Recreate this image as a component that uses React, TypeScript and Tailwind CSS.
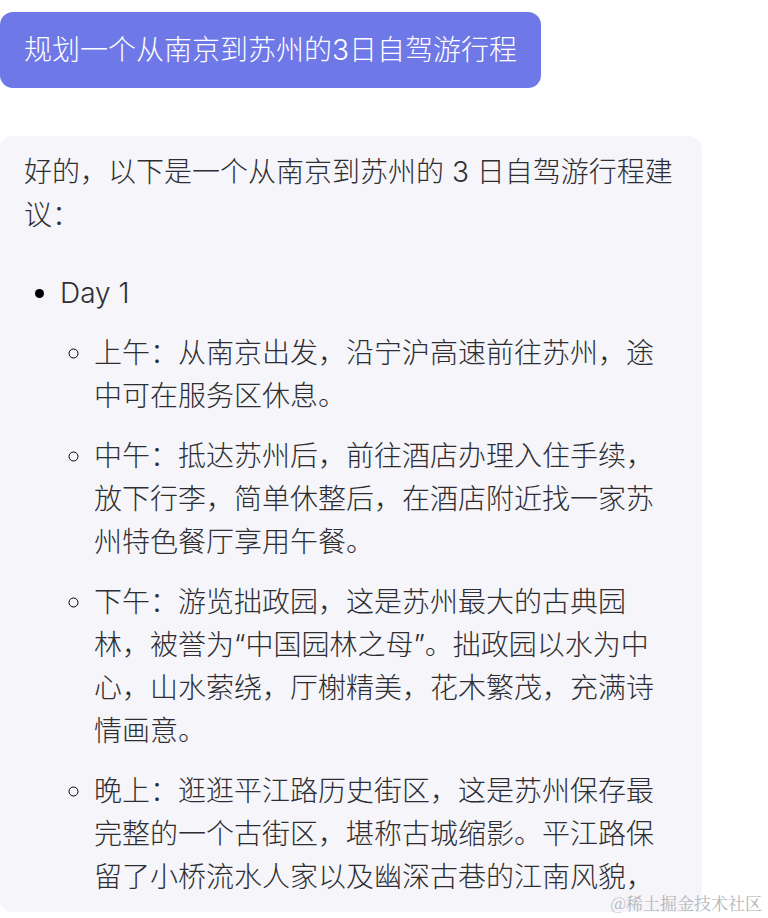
import React from 'react'

const items = [
  '上午：从南京出发，沿宁沪高速前往苏州，途中可在服务区休息。',
  '中午：抵达苏州后，前往酒店办理入住手续，放下行李，简单休整后，在酒店附近找一家苏州特色餐厅享用午餐。',
  '下午：游览拙政园，这是苏州最大的古典园林，被誉为“中国园林之母”。拙政园以水为中心，山水萦绕，厅榭精美，花木繁茂，充满诗情画意。',
  '晚上：逛逛平江路历史街区，这是苏州保存最完整的一个古街区，堪称古城缩影。平江路保留了小桥流水人家以及幽深古巷的江南风貌，',
]

export default function App() {
  return (
    <div
      className="relative h-[918px] w-[768px] overflow-hidden bg-white"
      style={{ fontFamily: 'Inter, "Noto Sans CJK SC", sans-serif' }}
      lang="zh-CN"
    >
      <div className="pt-3">
        {/* user message */}
        <div className="inline-block rounded-[13px] bg-[#6e78e7] px-6 py-[16px] text-[28px] font-light leading-[44px] text-white">
          规划一个从南京到苏州的3日自驾游行程
        </div>

        {/* assistant reply */}
        <div className="mt-12 h-[776px] w-[702px] rounded-[13px] bg-[#f5f5fa] px-6 pt-[15px] text-[28px] font-light leading-[43px] text-[#2e2e32]">
          <p>好的，以下是一个从南京到苏州的 3 日自驾游行程建议：</p>
          <ul className="mt-[35px] list-disc pl-9">
            <li className="marker:text-black">
              Day 1
              <ul className="list-[circle] pl-[34px]">
                {items.map((t) => (
                  <li key={t} className="mt-[17px] marker:text-[#333]">
                    {t}
                  </li>
                ))}
              </ul>
            </li>
          </ul>
        </div>
      </div>

      {/* watermark */}
      <div
        className="absolute bottom-[3px] right-[6px] text-[17px] text-[#b4b4b8]"
        style={{ fontFamily: '"Noto Serif CJK SC", "Noto Sans CJK SC", serif' }}
      >
        @稀土掘金技术社区
      </div>
    </div>
  )
}
